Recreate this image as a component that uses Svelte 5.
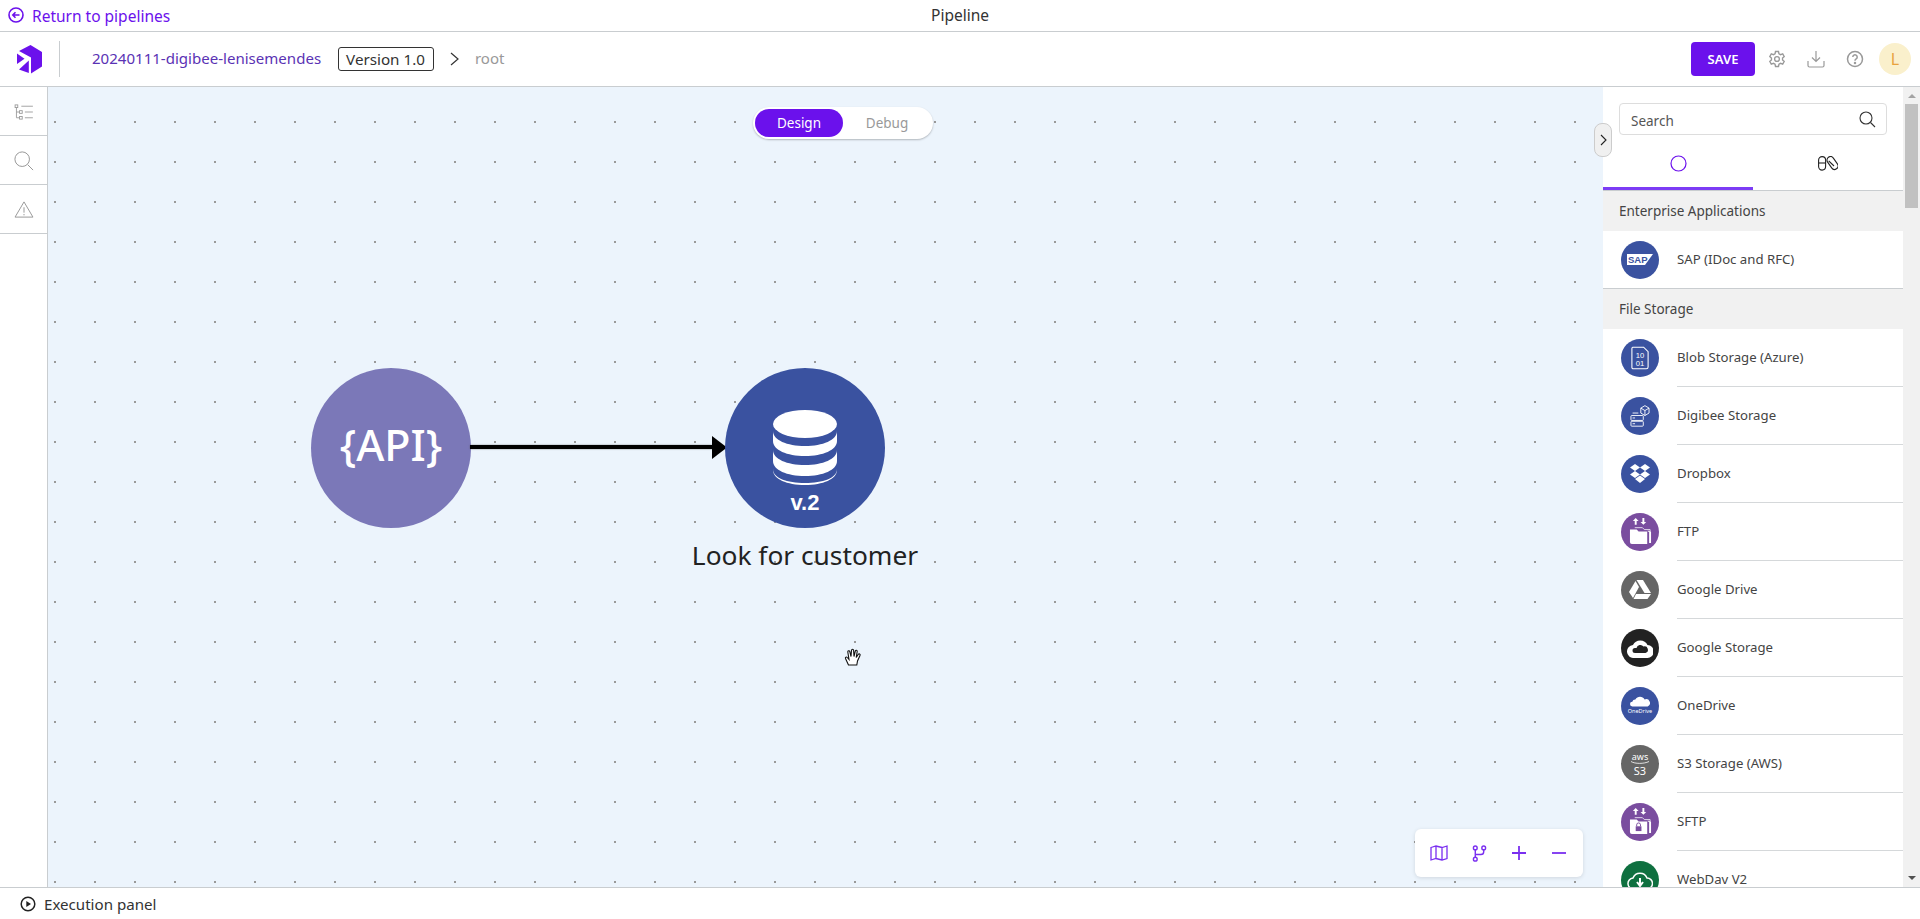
<script>
	const sections = [
		{
			title: 'Enterprise Applications',
			items: [{ label: 'SAP (IDoc and RFC)', icon: 'sap', color: '#3a52a0' }]
		},
		{
			title: 'File Storage',
			items: [
				{ label: 'Blob Storage (Azure)', icon: 'blob', color: '#3a52a0' },
				{ label: 'Digibee Storage', icon: 'digibee', color: '#3a52a0' },
				{ label: 'Dropbox', icon: 'dropbox', color: '#3a52a0' },
				{ label: 'FTP', icon: 'ftp', color: '#7a4d9f' },
				{ label: 'Google Drive', icon: 'drive', color: '#666666' },
				{ label: 'Google Storage', icon: 'gcs', color: '#222222' },
				{ label: 'OneDrive', icon: 'onedrive', color: '#3a52a0' },
				{ label: 'S3 Storage (AWS)', icon: 's3', color: '#666666' },
				{ label: 'SFTP', icon: 'sftp', color: '#7a4d9f' },
				{ label: 'WebDav V2', icon: 'webdav', color: '#0f7040' }
			]
		}
	];
</script>

<div class="page">
	<div class="topbar">
		<a class="back" href="#back">
			<svg width="16" height="16" viewBox="0 0 16 16" fill="none" stroke="currentColor" stroke-width="1.6">
				<circle cx="8" cy="8" r="7" />
				<path d="M11.500 8H5M7.500 5.300 4.800 8l2.700 2.700" />
			</svg>
			Return to pipelines
		</a>
		<span class="page-title">Pipeline</span>
	</div>

	<header class="header">
		<svg class="logo" width="26" height="29" viewBox="0 0 26 29" fill="#6b11ec">
			<path d="M2 6 13.500 0 25 7v14.500L14 28.500V12.500z" />
			<path d="M0 8.500v10.500l7.500-5.200z" />
			<path d="M2 24.500 11.800 15.500V28z" />
		</svg>
		<span class="divider"></span>
		<span class="pipeline-name">20240111-digibee-lenisemendes</span>
		<span class="version">Version 1.0</span>
		<svg class="crumb" width="9" height="14" viewBox="0 0 9 14" fill="none" stroke="#333" stroke-width="1.2">
			<path d="M1 1l7 6-7 6" />
		</svg>
		<span class="root">root</span>
		<div class="header-right">
			<button class="save">SAVE</button>
			<svg class="tool" width="18" height="18" viewBox="0 0 24 24" fill="none" stroke="#999" stroke-width="1.8">
				<path d="M10 2h4l.6 3 2.200 1.200 2.800-1 2 3.500-2.200 2v2.600l2.200 2-2 3.500-2.800-1-2.200 1.200-.6 3h-4l-.6-3-2.200-1.200-2.800 1-2-3.500 2.200-2v-2.600l-2.200-2 2-3.500 2.800 1L9.400 5z" />
				<circle cx="12" cy="12" r="3.200" />
			</svg>
			<svg class="tool" width="18" height="18" viewBox="0 0 18 18" fill="none" stroke="#999" stroke-width="1.200">
				<path d="M9 1v10M5 7.500 9 11.500l4-4M1 11v4.500a1.500 1.500 0 0 0 1.500 1.500h13a1.500 1.500 0 0 0 1.500-1.500V11" />
			</svg>
			<svg class="tool last" width="18" height="18" viewBox="0 0 18 18" fill="none" stroke="#999" stroke-width="1.500">
				<circle cx="9" cy="9" r="7.500" />
				<path d="M6.800 7a2.200 2.200 0 1 1 3.400 1.900C9.400 9.400 9 9.800 9 10.800" />
				<circle cx="9" cy="13" r=".5" />
			</svg>
			<span class="avatar">L</span>
		</div>
	</header>

	<div class="body">
		<nav class="rail">
			<div class="rail-cell low">
				<svg width="20" height="16" viewBox="0 0 22 18" fill="none" stroke="#999" stroke-width="1">
					<rect x="1" y="1" width="3" height="3" />
					<rect x="6" y="7.500" width="3" height="3" />
					<rect x="6" y="14" width="3" height="3" />
					<path d="M2.500 4v11.500H6M2.500 9H6M8 2.500h13M12 9h9M12 15.500h9" />
				</svg>
			</div>
			<div class="rail-cell low">
				<svg width="20" height="20" viewBox="0 0 22 22" fill="none" stroke="#999" stroke-width="1.100">
					<circle cx="9" cy="9" r="8" />
					<path d="M15 15l6 6" />
				</svg>
			</div>
			<div class="rail-cell">
				<svg width="20" height="17" viewBox="0 0 22 19" fill="none" stroke="#999" stroke-width="1.100">
					<path d="M11 1 21 18H1z" stroke-linejoin="round" />
					<path d="M11 7v6M11 14.500v1.500" />
				</svg>
			</div>
		</nav>

		<main class="canvas">
			<div class="mode-switch">
				<span class="mode active">Design</span>
				<span class="mode">Debug</span>
			</div>

			<div class="node api" style="left: 263px; top: 281px;">{'{API}'}</div>

			<div class="edge" style="left: 422px; top: 358px; width: 243px;"></div>
			<svg class="edge-head" style="left: 664px; top: 349px;" width="15" height="23" viewBox="0 0 15 23">
				<path d="M0 0 15 11.500 0 23z" fill="#000" />
			</svg>

			<div class="node db" style="left: 677px; top: 281px;">
				<svg class="db-icon" width="64" height="75" viewBox="0 0 64 75">
					<ellipse cx="32" cy="14" rx="32" ry="14" fill="#fff" />
					<path d="M0 21c0 9 14 15 32 15s32-6 32-15v10c0 9-14 15-32 15S0 40 0 31z" fill="#fff" />
					<path d="M0 40c0 9 14 15 32 15s32-6 32-15v11c0 9-14 15-32 15S0 60 0 51z" fill="#fff" />
					<path d="M0 59c0 9 14 14 32 14s32-5 32-14v1c0 9-14 15-32 15S0 69 0 60z" fill="#fff" />
				</svg>
				<span class="db-version">v.2</span>
			</div>
			<div class="node-label" style="left: 757px; top: 450px;">Look for customer</div>

			<svg class="cursor" style="left: 796px; top: 561px;" width="19" height="20" viewBox="0 0 19 20" fill="#fff" stroke="#111" stroke-width="1.100">
				<path d="M4.500 17 1.500 10.500c-.5-1.200 1-2 1.800-1L5 11.500 3.800 4c-.2-1.500 1.700-1.800 2-.4L7 8.500 7.500 2.300c.1-1.500 2-1.500 2.100 0L10 8.500l1.300-5.400c.4-1.400 2.200-1 1.900.4L12.200 9.500l2-3c.8-1.200 2.500-.3 1.800 1l-2.500 5.500-.7 4z" />
			</svg>

			<div class="map-tools">
				<svg width="18" height="16" viewBox="0 0 18 16" fill="none" stroke="#7a2ff0" stroke-width="1.300">
					<path d="M1 2.500 6 1l6 1.500L17 1v12.500L12 15l-6-1.500L1 15zM6 1v12.500M12 2.500V15" />
				</svg>
				<svg width="15" height="17" viewBox="0 0 16 18" fill="none" stroke="#7a2ff0" stroke-width="1.500">
					<circle cx="3.500" cy="3" r="2" />
					<circle cx="3.500" cy="15" r="2" />
					<circle cx="12.500" cy="3" r="2" />
					<path d="M3.500 5v8M3.500 10h6c2 0 3-1 3-3V5" />
				</svg>
				<svg width="14" height="14" viewBox="0 0 14 14" fill="none" stroke="#7a2ff0" stroke-width="1.800">
					<path d="M7 0v14M0 7h14" />
				</svg>
				<svg width="14" height="14" viewBox="0 0 14 14" fill="none" stroke="#7a2ff0" stroke-width="1.800">
					<path d="M0 7h14" />
				</svg>
			</div>
		</main>

		<aside class="side">
			<button class="collapse" aria-label="Collapse">
				<svg width="7" height="12" viewBox="0 0 7 12" fill="none" stroke="#222" stroke-width="1.100">
					<path d="M1 1l5 5-5 5" />
				</svg>
			</button>
			<div class="palette">
				<div class="search-wrap">
					<div class="search">
						<span class="search-text">Search</span>
						<svg width="17" height="17" viewBox="0 0 17 17" fill="none" stroke="#333" stroke-width="1.100">
							<circle cx="7" cy="7" r="6" />
							<path d="M11.500 11.500 16 16" />
						</svg>
					</div>
				</div>
				<div class="tabs">
					<div class="tab active">
						<svg width="17" height="17" viewBox="0 0 17 17" fill="none" stroke="#6b11ec" stroke-width="1.200">
							<circle cx="8.500" cy="8.500" r="7.500" />
						</svg>
					</div>
					<div class="tab">
						<svg width="20" height="15" viewBox="0 0 20 15" fill="none" stroke="#222" stroke-width="1.100">
							<rect x=".6" y=".6" width="7" height="13.500" rx="3.500" />
							<path d="M.6 7h7" />
							<rect x="11" y="0" width="7" height="14" rx="3.500" transform="rotate(-35 14.500 7)" />
							<path d="M10.700 4.800 16 10" />
						</svg>
					</div>
				</div>
				<div class="list">
					{#each sections as section}
						<div class="section-title">{section.title}</div>
						{#each section.items as item}
							<div class="row">
								<span class="badge" style="background: {item.color}">
									{#if item.icon === 'sap'}
										<svg width="26" height="11" viewBox="0 0 26 11">
											<path d="M0 0h26L18 11H0z" fill="#fff" />
											<text x="1" y="9" class="sap-text">SAP</text>
										</svg>
									{:else if item.icon === 'blob'}
										<svg width="18" height="24" viewBox="0 0 20 26" fill="none" stroke="#fff" stroke-width="1.200">
											<path d="M2 1h12l5 5v17a2 2 0 0 1-2 2H2.500A1.500 1.500 0 0 1 1 23.500V2.500A1.500 1.500 0 0 1 2 1z" />
											<text x="10" y="12.500" class="blob-text">10</text>
											<text x="10" y="21.500" class="blob-text">01</text>
										</svg>
									{:else if item.icon === 'digibee'}
										<svg width="20" height="23" viewBox="0 0 24 28" fill="none" stroke="#fff" stroke-width="1.100">
											<path d="M13 5l5-3 5 3v6l-5 3-5-3zM13 5l5 3 5-3M18 8v6" />
											<rect x="1" y="14" width="15" height="6" rx="1" />
											<rect x="1" y="21" width="15" height="6" rx="1" />
											<path d="M3 11h7M3 17h3M3 24h3" />
										</svg>
									{:else if item.icon === 'dropbox'}
										<svg width="22" height="20" viewBox="0 0 22 20" fill="#fff">
											<path d="M6 0 11 3.500 6 7 1 3.500zM16 0l5 3.500L16 7l-5-3.500zM6 7l5 3.500L6 14l-5-3.500zM16 7l5 3.500L16 14l-5-3.500zM6 15l5-3.500 5 3.500-5 4z" />
										</svg>
									{:else if item.icon === 'ftp' || item.icon === 'sftp'}
										<svg width="23" height="27" viewBox="0 0 24 28" fill="#fff">
											<path d="M7 0l3 3H8v4H6V3H4zM15 7l-3-3h2V0h2v4h2z" />
											<path d="M1 12h7l2 2h9v13H3a2 2 0 0 1-2-2z" />
											<path d="M21 14h2v12h-2z" />
											<path d="M6 10h8l2 2h6v2h-2v-1" fill="none" stroke="#fff" stroke-width=".8" />
											{#if item.icon === 'sftp'}
												<rect x="7" y="19" width="6" height="5" fill="#7a4d9f" />
												<path d="M8 19v-1.500a2 2 0 0 1 4 0V19" fill="none" stroke="#7a4d9f" stroke-width="1" />
											{/if}
										</svg>
									{:else if item.icon === 'drive'}
										<svg width="22" height="19" viewBox="0 0 22 19" fill="#fff">
											<path d="M7.500 0h6.500l8 13h-6.500z" />
											<path d="M6.500 1 10 7 4 18 0 12z" />
											<path d="M7 14h15l-3.500 5H4.500z" />
										</svg>
									{:else if item.icon === 'gcs'}
										<svg width="26" height="20" viewBox="0 0 26 20">
											<path d="M7 20a6.500 6.500 0 0 1-1-13 8 8 0 0 1 14.500 0 6.500 6.500 0 0 1-.500 13z" fill="#fff" />
											<path d="M8 15a2.500 2.500 0 0 1 0-5h1.500a4 4 0 0 1 7-1.500 3 3 0 0 1 2 6.500z" fill="#222" />
										</svg>
									{:else if item.icon === 'onedrive'}
										<span class="onedrive">
											<svg width="20" height="12" viewBox="0 0 26 14">
												<path d="M3 14a3 3 0 0 1 0-6 4 4 0 0 1 4-3 7 7 0 0 1 12 0 4.500 4.500 0 0 1 4 9z" fill="#fff" />
											</svg>
											<span>OneDrive</span>
										</span>
									{:else if item.icon === 's3'}
										<span class="s3">
											<span>aws</span>
											<svg width="18" height="3" viewBox="0 0 18 3" fill="none" stroke="#fff" stroke-width=".8">
												<path d="M0 .5c4 2.500 13 2.500 18 0" />
											</svg>
											<b>S3</b>
										</span>
									{:else if item.icon === 'webdav'}
										<svg width="26" height="22" viewBox="0 0 26 22" fill="none" stroke="#fff" stroke-width="1.500">
											<path d="M7 20a5.500 5.500 0 0 1-1-11 7.500 7.500 0 0 1 14 0 5.500 5.500 0 0 1 0 11z" />
											<path d="M13 9v7M10 13l3 4 3-4" stroke-width="2" />
										</svg>
									{/if}
								</span>
								<span class="row-label">{item.label}</span>
							</div>
						{/each}
					{/each}
				</div>
			</div>
			<div class="scrollbar">
				<span class="arrow-up"></span>
				<span class="thumb"></span>
				<span class="spacer"></span>
				<span class="arrow-down"></span>
			</div>
		</aside>
	</div>

	<footer class="footer">
		<svg width="16" height="16" viewBox="0 0 16 16" fill="none" stroke="#222" stroke-width="1.500">
			<circle cx="8" cy="8" r="6.800" />
			<path d="M6.300 5v6L11 8z" fill="#222" stroke="none" />
		</svg>
		Execution panel
	</footer>
</div>

<style>
	:global(body) {
		margin: 0;
		font-family: 'Noto Sans', sans-serif;
		color: #333;
	}

	.page {
		display: flex;
		flex-direction: column;
		height: 919px;
		overflow: hidden;
		background: #fff;
	}

	.topbar {
		position: relative;
		display: flex;
		align-items: center;
		justify-content: center;
		flex: 0 0 32px;
		box-sizing: border-box;
		border-bottom: 1px solid #c9cdd0;
		font-size: 15.5px;
	}

	.back {
		position: absolute;
		left: 8px;
		top: 8px;
		display: flex;
		align-items: center;
		gap: 8px;
		color: #6b11ec;
		text-decoration: none;
		line-height: 16px;
	}

	.back svg {
		margin-top: -2px;
	}

	.page-title {
		margin-bottom: 1px;
		color: #333;
	}

	.header {
		display: flex;
		align-items: center;
		flex: 0 0 55px;
		box-sizing: border-box;
		border-bottom: 1px solid #c9cdd0;
		padding: 0 9px 0 17px;
	}

	.divider {
		width: 1px;
		height: 36px;
		margin: 0 32px 0 16px;
		background: #c9cdd0;
	}

	.pipeline-name {
		margin-bottom: 2px;
		font-size: 15.06px;
		color: #5a32b4;
	}

	.version {
		box-sizing: border-box;
		height: 24px;
		margin-left: 17px;
		padding: 0 8px 0 7px;
		border: 1px solid #333;
		border-radius: 3px;
		font-size: 15.2px;
		line-height: 22px;
		color: #333;
	}

	.crumb {
		margin: 0 16px 0 16px;
	}

	.root {
		margin-bottom: 2px;
		font-size: 15px;
		color: #999;
	}

	.header-right {
		display: flex;
		align-items: center;
		margin-left: auto;
	}

	.save {
		width: 64px;
		height: 34px;
		margin-right: 13px;
		border: 0;
		border-radius: 4px;
		background: #6b11ec;
		color: #fff;
		font-family: inherit;
		font-size: 13px;
		font-weight: 600;
	}

	.tool {
		margin-right: 21px;
	}

	.tool.last {
		margin-right: 15px;
	}

	.avatar {
		display: flex;
		align-items: center;
		justify-content: center;
		width: 32px;
		height: 32px;
		border-radius: 50%;
		background: #faf0cc;
		color: #e8a13c;
		font-size: 16px;
	}

	.body {
		display: flex;
		flex: 1;
		min-height: 0;
	}

	.rail {
		flex: 0 0 48px;
		box-sizing: border-box;
		border-right: 1px solid #c9cdd0;
	}

	.rail-cell {
		display: flex;
		align-items: center;
		justify-content: center;
		box-sizing: border-box;
		height: 49px;
		border-bottom: 1px solid #c9cdd0;
	}

	.rail-cell.low {
		padding-top: 2px;
	}

	.canvas {
		position: relative;
		flex: 1;
		min-width: 0;
		background-color: #ecf4fc;
		background-image: radial-gradient(circle at 1px 1px, #9a9a9a 1px, transparent 1.2px);
		background-size: 40px 40px;
		background-position: 6px 34px;
	}

	.mode-switch {
		position: absolute;
		left: 705px;
		top: 20px;
		display: flex;
		box-sizing: border-box;
		width: 180px;
		height: 32px;
		padding: 2px;
		border-radius: 16px;
		background: #fff;
		box-shadow: 0 1px 2px rgba(0, 0, 0, 0.25);
	}

	.mode {
		flex: 0 0 88px;
		height: 28px;
		border-radius: 14px;
		font-size: 13.5px;
		line-height: 28px;
		text-align: center;
		color: #999;
	}

	.mode.active {
		background: #6b11ec;
		color: #fff;
	}

	.node {
		position: absolute;
		display: flex;
		align-items: center;
		justify-content: center;
		width: 160px;
		height: 160px;
		border-radius: 50%;
		color: #fff;
	}

	.api {
		box-sizing: border-box;
		padding-bottom: 7px;
		background: #7b78b8;
		font-size: 43px;
		font-weight: 500;
	}

	.db {
		background: #3a52a0;
		flex-direction: column;
		justify-content: flex-start;
	}

	.db-icon {
		margin-top: 42px;
	}

	.db-version {
		margin-top: 6px;
		font-family: 'Liberation Sans', sans-serif;
		font-size: 22px;
		font-weight: 700;
		line-height: 24px;
	}

	.edge {
		position: absolute;
		height: 4px;
		background: #000;
		box-shadow: 0 0 1.5px #555;
	}

	.edge-head,
	.cursor {
		position: absolute;
	}

	.node-label {
		position: absolute;
		transform: translateX(-50%);
		font-size: 26.3px;
		line-height: 36px;
		white-space: nowrap;
		color: #222;
	}

	.map-tools {
		position: absolute;
		left: 1367px;
		top: 742px;
		display: grid;
		grid-template-columns: repeat(4, 40px);
		align-items: center;
		justify-items: center;
		width: 168px;
		height: 48px;
		padding: 0 4px;
		box-sizing: border-box;
		border-radius: 6px;
		background: #fff;
		box-shadow: 0 1px 4px rgba(0, 0, 0, 0.12);
	}

	.side {
		position: relative;
		display: flex;
		flex: 0 0 317px;
	}

	.collapse {
		position: absolute;
		left: -9px;
		top: 36px;
		z-index: 1;
		display: flex;
		align-items: center;
		justify-content: center;
		box-sizing: border-box;
		width: 18px;
		height: 34px;
		padding: 0;
		border: 1px solid #ccc;
		border-radius: 8px;
		background: #f0f0f0;
	}

	.palette {
		display: flex;
		flex-direction: column;
		flex: 1;
		min-width: 0;
	}

	.search-wrap {
		padding: 16px 16px 0;
	}

	.search {
		display: flex;
		align-items: center;
		justify-content: space-between;
		box-sizing: border-box;
		height: 32px;
		padding: 0 10px 0 11px;
		border: 1px solid #ddd;
		border-radius: 4px;
		font-size: 13.5px;
		color: #555;
	}

	.search-text {
		padding-top: 4px;
	}

	.tabs {
		display: flex;
		box-sizing: border-box;
		height: 56px;
		border-bottom: 1px solid #c9cdd0;
	}

	.tab {
		display: flex;
		align-items: center;
		justify-content: center;
		flex: 1;
		box-sizing: border-box;
		padding-top: 1px;
	}

	.tab.active {
		padding-top: 4px;
		border-bottom: 3px solid #7c3cf5;
	}

	.list {
		flex: 1;
		min-height: 0;
		overflow: hidden;
	}

	.section-title {
		height: 40px;
		padding: 0 16px;
		background: #f1f1f1;
		font-size: 13.5px;
		line-height: 41px;
		color: #444;
	}

	.row {
		position: relative;
		display: flex;
		align-items: center;
		box-sizing: border-box;
		height: 58px;
		padding: 0 0 1px 18px;
	}

	.row::after {
		content: '';
		position: absolute;
		left: 74px;
		right: 0;
		bottom: 0;
		height: 1px;
		background: #d5d8da;
	}

	.section-title:first-child + .row::after {
		left: 0;
		background: #c9cdd0;
	}

	.badge {
		display: flex;
		align-items: center;
		justify-content: center;
		flex: 0 0 38px;
		height: 38px;
		margin-right: 18px;
		border-radius: 50%;
	}

	.row-label {
		margin-bottom: 2px;
		font-size: 13.2px;
		color: #444;
	}

	.sap-text {
		font-family: 'Liberation Sans', sans-serif;
		font-size: 9.5px;
		font-weight: 700;
		fill: #3a52a0;
	}

	.blob-text {
		font-family: 'Liberation Sans', sans-serif;
		font-size: 8.5px;
		fill: #fff;
		stroke: none;
		text-anchor: middle;
	}

	.onedrive,
	.s3 {
		display: flex;
		flex-direction: column;
		align-items: center;
		color: #fff;
	}

	.onedrive span {
		font-size: 5.5px;
		line-height: 9px;
	}

	.s3 {
		font-size: 9px;
		line-height: 9px;
	}

	.s3 b {
		margin-top: 2px;
		font-size: 11px;
		font-weight: 400;
	}

	.scrollbar {
		display: flex;
		flex-direction: column;
		align-items: center;
		flex: 0 0 17px;
		background: #f1f1f1;
	}

	.arrow-up,
	.arrow-down {
		width: 0;
		height: 0;
		border-left: 4px solid transparent;
		border-right: 4px solid transparent;
	}

	.arrow-up {
		margin-top: 7px;
		border-bottom: 4px solid #a3a3a3;
	}

	.arrow-down {
		margin-bottom: 7px;
		border-top: 4px solid #505050;
	}

	.thumb {
		width: 13px;
		height: 104px;
		margin-top: 6px;
		background: #c1c1c1;
	}

	.spacer {
		flex: 1;
	}

	.footer {
		display: flex;
		align-items: center;
		gap: 8px;
		flex: 0 0 32px;
		box-sizing: border-box;
		padding-left: 20px;
		border-top: 1px solid #c9cdd0;
		font-size: 15.1px;
		color: #333;
	}
</style>
